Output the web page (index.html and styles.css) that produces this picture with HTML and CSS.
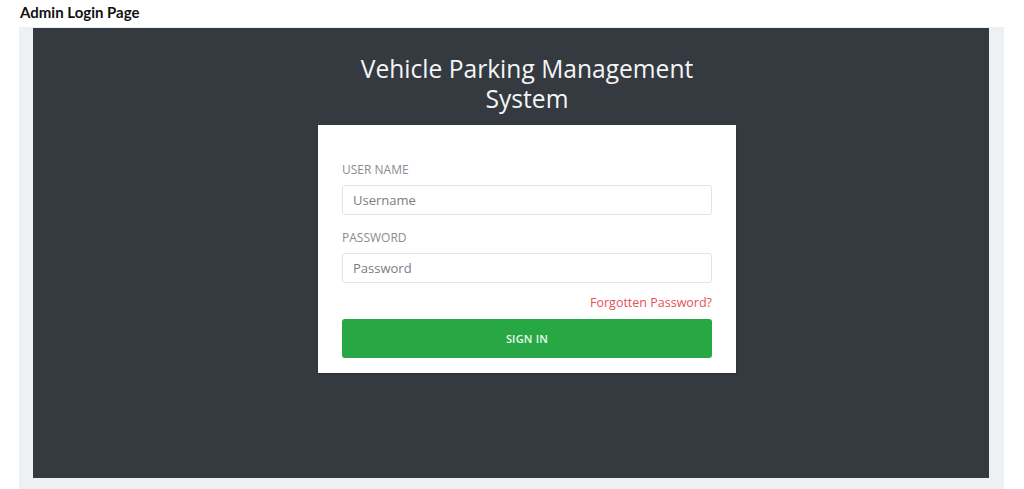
FILE: index.html
```html
<!DOCTYPE html>
<html>
<head>
<meta charset="utf-8">
<link rel="stylesheet" href="styles.css">
</head>
<body>
<div class="page-title">Admin Login Page</div>
<div class="frame">
  <div class="panel">
    <h1 class="app-title"><span class="title-line">Vehicle Parking Management</span><span class="title-line">System</span></h1>
    <form class="card">
      <label class="field-label">USER NAME</label>
      <input class="field-input" type="text" placeholder="Username">
      <label class="field-label second">PASSWORD</label>
      <input class="field-input" type="password" placeholder="Password">
      <div class="forgot-row"><a class="forgot" href="#">Forgotten Password?</a></div>
      <button class="signin" type="button">SIGN IN</button>
    </form>
  </div>
</div>
</body>
</html>
```
FILE: styles.css
```css
html, body {
  margin: 0;
  padding: 0;
  background: #ffffff;
  font-family: "Open Sans", "Noto Sans", sans-serif;
}
.page-title {
  height: 27px;
  box-sizing: border-box;
  padding: 3px 0 0 20px;
  font-family: Lato, "Open Sans", sans-serif;
  font-weight: 700;
  font-size: 15px;
  line-height: 19px;
  color: #111;
}
.frame {
  margin-left: 19px;
  width: 985px;
  height: 462px;
  box-sizing: border-box;
  background: #eef1f4;
  padding: 1px 15px 11px 14px;
}
.panel {
  height: 100%;
  box-sizing: border-box;
  background: #353a40;
  padding: 26px 0 0 32px;
  display: flex;
  flex-direction: column;
  align-items: center;
}
.app-title {
  margin: 0;
  font-weight: 400;
  font-size: 24.6px;
  color: #f4f5f6;
  text-align: center;
  display: flex;
  flex-direction: column;
  align-items: center;
}
.title-line {
  display: block;
  height: 30px;
  line-height: 30px;
}
.card {
  margin-top: 11px;
  width: 418px;
  box-sizing: border-box;
  background: #ffffff;
  padding: 36px 24px 15px;
  display: flex;
  flex-direction: column;
  box-shadow: 0 1px 2px rgba(0,0,0,0.2);
}
.field-label {
  font-size: 12px;
  line-height: 18px;
  color: #8a8d91;
  margin-bottom: 6px;
}
.field-label.second {
  margin-top: 14px;
  margin-bottom: 6px;
}
.field-input {
  height: 30px;
  box-sizing: border-box;
  border: 1px solid #e2e5e8;
  border-radius: 3px;
  padding: 0 10px;
  font-family: inherit;
  font-size: 13px;
  color: #555;
  outline: none;
}
.field-input::placeholder {
  color: #7a7d80;
}
.forgot-row {
  margin-top: 11px;
  display: flex;
  justify-content: flex-end;
  line-height: 18px;
}
.forgot {
  font-size: 12.5px;
  color: #e8505b;
  text-decoration: none;
}
.signin {
  margin-top: 7px;
  height: 39px;
  border: none;
  border-radius: 3px;
  background: #28a745;
  color: #eafbe9;
  font-family: inherit;
  font-size: 11px;
  font-weight: 600;
  letter-spacing: 0.2px;
}
```
